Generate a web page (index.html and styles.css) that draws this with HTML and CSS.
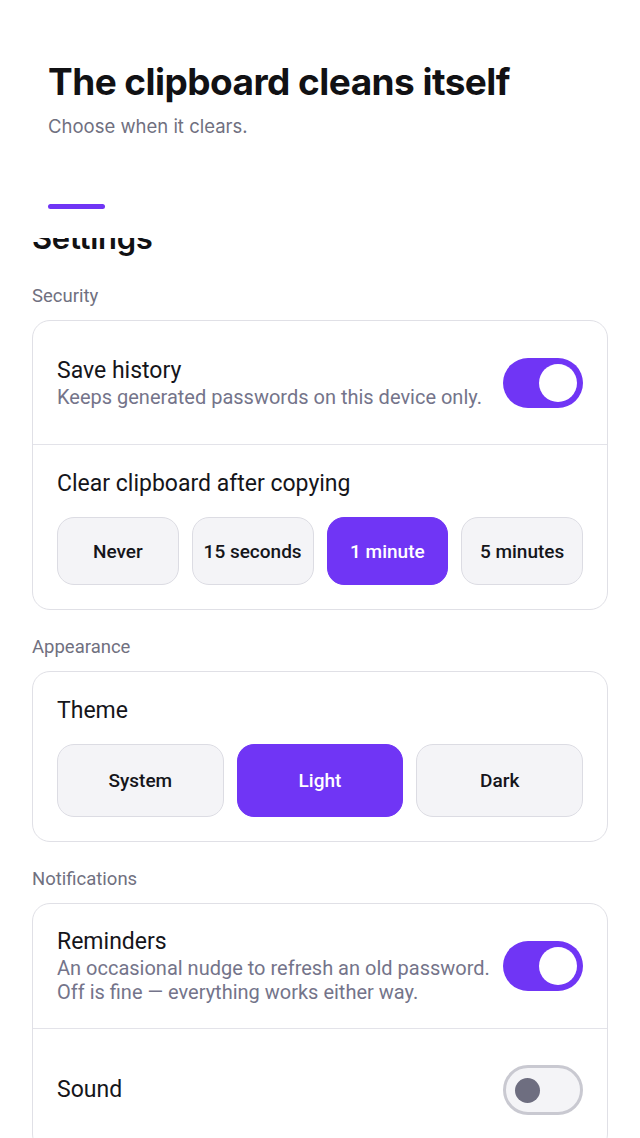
FILE: index.html
```html
<!DOCTYPE html>
<html lang="en">
<head>
<meta charset="utf-8">
<title>Settings</title>
<link rel="stylesheet" href="styles.css">
</head>
<body>
<header class="header">
  <h1 class="title">The clipboard cleans itself</h1>
  <p class="subtitle">Choose when it clears.</p>
  <div class="indicator"></div>
</header>
<main class="scroller">
  <div class="scroll-content">
    <h2 class="page-heading">Settings</h2>

    <section class="section">
      <div class="section-label">Security</div>
      <div class="card">
        <div class="row">
          <div class="row-text">
            <div class="row-title">Save history</div>
            <div class="row-desc">Keeps generated passwords on this device only.</div>
          </div>
          <div class="toggle on"><span class="knob"></span></div>
        </div>
        <div class="row stack">
          <div class="row-title">Clear clipboard after copying</div>
          <div class="segments four">
            <button class="seg">Never</button>
            <button class="seg">15 seconds</button>
            <button class="seg active">1 minute</button>
            <button class="seg">5 minutes</button>
          </div>
        </div>
      </div>
    </section>

    <section class="section">
      <div class="section-label">Appearance</div>
      <div class="card">
        <div class="row stack">
          <div class="row-title">Theme</div>
          <div class="segments three">
            <button class="seg">System</button>
            <button class="seg active">Light</button>
            <button class="seg">Dark</button>
          </div>
        </div>
      </div>
    </section>

    <section class="section">
      <div class="section-label">Notifications</div>
      <div class="card">
        <div class="row">
          <div class="row-text">
            <div class="row-title">Reminders</div>
            <div class="row-desc">An occasional nudge to refresh an old password.<br>Off is fine — everything works either way.</div>
          </div>
          <div class="toggle on"><span class="knob"></span></div>
        </div>
        <div class="row">
          <div class="row-text">
            <div class="row-title">Sound</div>
          </div>
          <div class="toggle off"><span class="knob"></span></div>
        </div>
      </div>
    </section>
  </div>
</main>
</body>
</html>
```

FILE: styles.css
```css
* { box-sizing: border-box; }

html, body {
  margin: 0;
  padding: 0;
  background: #ffffff;
}

body {
  width: 640px;
  height: 1138px;
  overflow: hidden;
  display: flex;
  flex-direction: column;
  font-family: Roboto, "Liberation Sans", sans-serif;
  color: #15151a;
}

.header {
  padding: 60px 48px 29px;
  flex: none;
}

.title {
  margin: 0;
  font-family: Inter, "Liberation Sans", sans-serif;
  font-weight: 700;
  font-size: 37px;
  line-height: 44px;
  letter-spacing: -0.55px;
  color: #111114;
}

.subtitle {
  margin: 10px 0 0;
  font-family: Inter, "Liberation Sans", sans-serif;
  font-size: 18.5px;
  line-height: 24px;
  color: #70707f;
}

.indicator {
  margin-top: 66px;
  width: 57px;
  height: 5px;
  border-radius: 3px;
  background: #7035f5;
}

.scroller {
  flex: 1;
  overflow: hidden;
  padding: 0 32px;
}

.scroll-content {
  margin-top: -19px;
}

.page-heading {
  margin: 0;
  font-family: Inter, "Liberation Sans", sans-serif;
  font-weight: 600;
  font-size: 31px;
  line-height: 38px;
  letter-spacing: -0.3px;
  color: #111114;
}

.section {
  margin-top: 26px;
}

.section:first-of-type {
  margin-top: 28px;
}

.section-label {
  font-size: 18.5px;
  line-height: 22px;
  color: #70707f;
  margin-bottom: 13px;
}

.card {
  border: 1.5px solid #e0e0e6;
  border-radius: 18px;
  background: #ffffff;
  overflow: hidden;
}

.row {
  min-height: 123px;
  padding: 24px;
  display: flex;
  align-items: center;
  gap: 10px;
}

.row + .row {
  border-top: 1.5px solid #e3e3e9;
}

.row.stack {
  min-height: 0;
  padding-top: 25px;
  flex-direction: column;
  align-items: stretch;
  gap: 19px;
}

.row-text {
  flex: 1;
  min-width: 0;
}

.row-title {
  font-size: 23px;
  line-height: 28px;
  color: #15151a;
}

.row-desc {
  font-size: 20px;
  line-height: 24px;
  color: #74748a;
  white-space: nowrap;
}

.toggle {
  flex: none;
  width: 80px;
  height: 50px;
  border-radius: 25px;
  display: flex;
  align-items: center;
}

.toggle.on {
  background: #7035f5;
  justify-content: flex-end;
  padding: 0 6px;
}

.toggle.on .knob {
  width: 38px;
  height: 38px;
  border-radius: 50%;
  background: #ffffff;
}

.toggle.off {
  background: #f4f4f7;
  border: 3px solid #c9c9d1;
  padding: 0 9px;
}

.toggle.off .knob {
  width: 25px;
  height: 25px;
  border-radius: 50%;
  background: #6e6e80;
}

.segments {
  display: grid;
  gap: 13px;
}

.segments.four {
  grid-template-columns: repeat(4, 1fr);
}

.segments.four .seg {
  height: 68px;
}

.segments.three {
  grid-template-columns: repeat(3, 1fr);
}

.segments.three .seg {
  height: 73px;
}

.seg {
  font-family: Roboto, "Liberation Sans", sans-serif;
  font-weight: 500;
  font-size: 19px;
  color: #15151a;
  background: #f4f4f7;
  border: 1.5px solid #dcdce3;
  border-radius: 17px;
  padding: 0;
  white-space: nowrap;
}

.seg.active {
  background: #7035f5;
  border-color: #7035f5;
  color: #ffffff;
}
```
